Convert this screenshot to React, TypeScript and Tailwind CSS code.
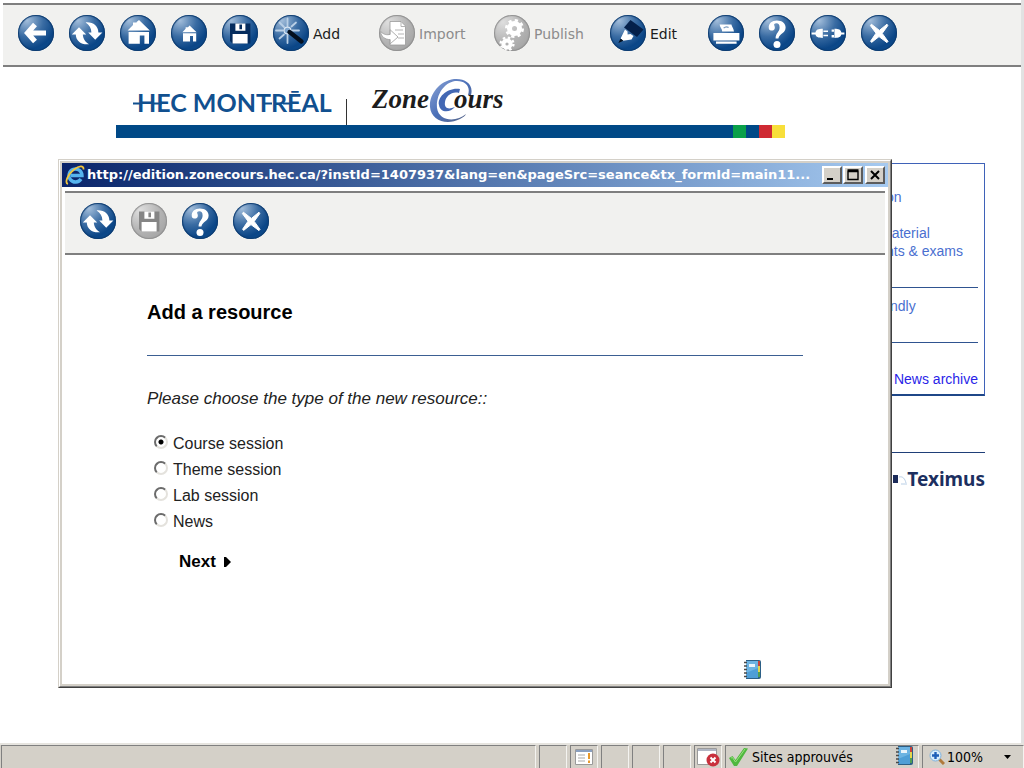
import clsx from 'clsx'
import { useState } from 'react'
import type { ReactNode } from 'react'

const glyphs = {
  back: (
    <path
      d="M17 9.5 L9.5 18 L17 26.5 M10 18 H28"
      fill="none"
      stroke="#fff"
      strokeWidth="5.2"
    />
  ),
  refresh: (
    <g fill="#fff">
      <path d="M10 12.2 L17.2 19.4 H13.8 C14.2 23.8 16 26.6 20 29.2 C12.6 30 7 26.2 6.8 19.4 H2.8 Z" />
      <path d="M26.2 24.8 L19.2 17.4 H22.4 C22.2 12.8 20.4 9.8 16.6 7.4 C24 6.8 29.2 10.8 29.4 17.4 H33.4 Z" />
    </g>
  ),
  home: (
    <g fill="#fff">
      <path d="M19 5 L29.8 15.6 H7.6 L13 10 V7.4 H16.6 V7 Z" />
      <path d="M8.6 17 H29 V28.8 H24.4 V20.6 H19.8 V28.8 H8.6 Z" />
    </g>
  ),
  smallHome: (
    <g fill="#fff">
      <path d="M18.6 10.6 L25.6 17.2 H11.4 L14.6 13.8 V12.2 H17 Z" />
      <path d="M12 18.2 H25.2 V26.6 H22 V21 H19 V26.6 H12 Z" />
    </g>
  ),
  wand: (
    <g strokeLinecap="round">
      <path
        d="M14.5 3.5 V11 M14.5 20 V28 M3 15.5 H10 M19 15.5 H26 M6.5 7.5 L11 12 M23 7.5 L18.5 11.5 M6.5 23.5 L11 19.5"
        stroke="#b9cfe6"
        strokeWidth="1.8"
      />
      <circle cx="14.5" cy="15.5" r="3.4" fill="#7fa6cf" stroke="#d7e4f2" strokeWidth="1.2" />
      <path d="M16.5 17 L28.5 26.5" stroke="#04101f" strokeWidth="4.4" />
    </g>
  ),
  importPage: (
    <g>
      <path d="M11 6.5 H22 L26.5 11 V30 H11 Z" fill="#fff" stroke="#9a9a9a" strokeWidth="0.8" />
      <path d="M22 7 V11.5 H26.5 M16 15 H24 M19 19 H25 M19 23 H25" fill="none" stroke="#b5b5b5" />
      <path
        d="M1.6 16.5 C5 20 8 20 11.2 19.4 V14.8 L19 22 L11.2 28.8 V24.6 C6 24.6 2 21.6 1.6 16.5 Z"
        fill="#fff"
        stroke="#9a9a9a"
        strokeWidth="0.8"
      />
    </g>
  ),
  gears: (
    <g fill="none" stroke="#fff">
      <circle cx="20.5" cy="13.5" r="5" strokeWidth="5" />
      <circle cx="20.5" cy="13.5" r="8.2" strokeWidth="2.6" strokeDasharray="3.2 3.24" />
      <circle cx="13" cy="29" r="3.6" strokeWidth="4" />
      <circle cx="13" cy="29" r="6.4" strokeWidth="2.4" strokeDasharray="2.5 2.53" />
    </g>
  ),
  pencil: (
    <g>
      <path d="M20.5 5 L33.5 14.5 L27 22 L14 12.5 Z" fill="#04204a" />
      <path d="M15 14.5 L17.5 16.5 L17.6 19.5 L20.5 19 L23.5 21 L21.5 24.5 L13 25.8 L10.6 23.4 Z" fill="#fff" />
      <path d="M10.6 23.4 L13.4 25.8 L8.4 28 Z" fill="#04101f" />
    </g>
  ),
  save: (
    <g>
      <path d="M8 8.4 H28.4 V28.4 H10.4 L8 26 Z" className="fill-(--disk)" />
      <path d="M13.4 8.4 H23.4 V15.8 H13.4 Z M10.6 19 H25.6 V28.4 H10.6 Z" fill="#fff" />
      <path d="M17.4 9.6 H20 V14.2 H17.4 Z" className="fill-(--disk)" />
    </g>
  ),
  printer: (
    <g fill="#fff">
      <path d="M11.6 9.4 H23.4 C24 12 25.6 13.4 26 16.4 H14.2 C14 13.4 12 12.4 11.6 9.4 Z" />
      <path d="M5.4 18 H31.4 V25.4 H5.4 Z" />
      <path d="M8 26.4 H28.6 V28.8 H8 Z" />
      <path d="M15.6 13.2 C17 11.8 19 11.4 20.6 12.6" fill="none" stroke="#7c9cc0" strokeWidth="1.2" />
    </g>
  ),
  help: (
    <g fill="#fff">
      <path d="M9.8 13.4 C9.2 8.4 13 5.6 17.8 5.6 C23.2 5.6 26.6 8.4 26.6 12.6 C26.6 18.4 20.4 18.6 19.4 23.6 H16.6 C16.4 17.8 20.6 17 20.6 12.4 C20.6 9.6 19.4 8.2 17.4 8.2 C15.4 8.2 14.6 9 15.4 10.8 C16.6 13.4 15.2 15.6 12.9 15.6 C11.2 15.6 10 14.8 9.8 13.4 Z" />
      <circle cx="18" cy="29.4" r="3.5" />
    </g>
  ),
  plug: (
    <g fill="#fff">
      <path d="M1.6 17.4 H5.4 C6.2 14.8 8 13.8 12.8 13.8 V23 C8 23 6.2 22 5.4 19.6 H1.6 Z M13.4 15.6 H18 V17 H13.4 Z M13.4 19.8 H18 V21.2 H13.4 Z" />
      <path d="M34.4 17.4 H31.4 C30.6 14.8 29 13.8 24.4 13.8 V23 C29 23 30.6 22 31.4 19.6 H34.4 Z" />
      <path d="M21.6 14.4 H24 V16.8 H21.6 Z M21.6 20 H24 V22.4 H21.6 Z" />
    </g>
  ),
  close: (
    <path
      d="M10.4 9.2 L18.4 15.4 L26 9.2 L26.8 10.6 L21.2 18.4 L27 26.4 L26 27.6 L18 21.6 L10.6 27.4 L9.6 26.2 L15 18.2 L9.4 10.6 Z"
      fill="#fff"
      stroke="#fff"
      strokeLinejoin="round"
    />
  ),
}

type Glyph = keyof typeof glyphs

interface ToolProps {
  glyph: Glyph
  title: string
  label?: string
  disabled?: boolean
  className?: string
}

function Tool({ glyph, title, label, disabled, className }: ToolProps) {
  return (
    <button
      type="button"
      aria-label={title}
      disabled={disabled}
      className={clsx(
        'flex shrink-0 items-center gap-1 text-sm',
        disabled ? 'text-[#8c8c8c] [--disk:#858585]' : 'text-[#1c1c1c] [--disk:#052c5e]',
        className,
      )}
    >
      <span
        className={clsx(
          'size-9 shrink-0 overflow-hidden rounded-full',
          disabled
            ? 'bg-[radial-gradient(circle_at_25%_20%,#dedede,#b4b4b4_50%,#9d9d9d)] inset-shadow-[0_0_1px_1px_#8f8f8f]'
            : 'bg-[radial-gradient(circle_at_25%_15%,#a3bedb,#3a6ca3_40%,#0b4687_70%,#0f5396)] inset-shadow-[0_0_1px_1px_#0c3a6e]',
        )}
      >
        <svg viewBox="0 0 36 36" className="size-9">
          {glyphs[glyph]}
        </svg>
      </span>
      {label && <span className="pt-0.5">{label}</span>}
    </button>
  )
}

function Toolbar({ children }: { children: ReactNode }) {
  return (
    <div className="ml-[3px] flex gap-[15px] border-y-2 border-[#7f7f7f] bg-[#f1f1ef] px-[15px] pt-2.5 pb-3.5 font-['DejaVu_Sans',sans-serif]">
      {children}
    </div>
  )
}

function HecLogo() {
  return (
    <svg width="204" height="40" viewBox="0 0 204 40" role="img" aria-label="HEC Montréal">
      <text x="5" y="32" fill="#11508f" fontSize="25" fontWeight="700" fontFamily="Lato, sans-serif">
        HEC MONTRĒAL
      </text>
      <path d="M1 23.5 H8 M22 23.5 H30 M132 23.5 H140 M151 23.5 H159" stroke="#11508f" strokeWidth="2" />
    </svg>
  )
}

function ZoneCoursLogo() {
  return (
    <svg width="140" height="48" viewBox="0 0 140 48" role="img" aria-label="ZoneCours">
      <defs>
        <linearGradient id="swirl" x1="0" y1="0" x2="1" y2="1">
          <stop offset="0" stopColor="#8fa6d6" />
          <stop offset="0.5" stopColor="#4a6fb8" />
          <stop offset="1" stopColor="#5b6480" />
        </linearGradient>
      </defs>
      <path
        d="M103 18 C106 7 97 1 86 2 C71 4 61 18 62 30 C63 43 78 49 92 42 C95 40.500 97 39 98 37 C89 45 71 45 69 31 C68 19 75 6 87 4 C97 3 103 9 100 18 Z"
        fill="url(#swirl)"
      />
      <path
        d="M92 12 C80 10 69 20 71 28 C72 36 82 36 87 30 C80 33 76 31 77 25 C78 19 84 14 91 16 Z"
        fill="#4368b4"
      />
      <g fontFamily="'Liberation Serif', serif" fontStyle="italic" fontWeight="700" fontSize="27" fill="#1c1c1c">
        <text x="4" y="31">Zone</text>
        <text x="86" y="31">ours</text>
      </g>
    </svg>
  )
}

function Notebook({ className }: { className?: string }) {
  return (
    <svg width="19" height="21" viewBox="0 0 19 21" className={className} aria-hidden="true">
      <path d="M3 1 H16 Q18 1 18 3 V18 Q18 20 16 20 H3 Z" fill="#2c5f86" />
      <path d="M15 2 H17 V7 H15 Z" fill="#c8423a" />
      <path d="M15 7 H17 V13 H15 Z" fill="#e3d64c" />
      <path d="M15 13 H17 V18 H15 Z" fill="#4f9d54" />
      <path d="M3 2 H15 V19 H3 Z" fill="#4f9ed6" />
      <path d="M3 2 H15 V9 L3 14 Z" fill="#6cb3e2" />
      <path d="M6 5 H12 V8 H6 Z" fill="#e8f3fb" />
      <path
        d="M1 3.500 H4 M1 7 H4 M1 10.500 H4 M1 14 H4 M1 17.500 H4"
        stroke="#4a4a4a"
        strokeWidth="1.400"
      />
    </svg>
  )
}

function ExplorerIcon() {
  return (
    <svg width="20" height="20" viewBox="0 0 20 20" aria-hidden="true" className="shrink-0">
      <path
        d="M16 14 A6.500 6.500 0 1 1 17 10.500 H6"
        fill="none"
        stroke="#56b4ee"
        strokeWidth="3.400"
      />
      <path
        d="M3 19 C-1 18 3 9 9 4.500 C14 0.500 19 0 18.500 4.500"
        fill="none"
        stroke="#f2c63c"
        strokeWidth="1.800"
      />
    </svg>
  )
}

function WindowButton({ title, children }: { title: string; children: ReactNode }) {
  return (
    <button
      type="button"
      aria-label={title}
      className="h-[18px] w-5 border-2 border-t-white border-r-[#5c5c5c] border-b-[#5c5c5c] border-l-white bg-[#d4d0c8]"
    >
      <svg viewBox="0 0 16 14" className="h-3.5 w-4" fill="none" stroke="#000" strokeWidth="2">
        {children}
      </svg>
    </button>
  )
}

const resourceTypes = ['Course session', 'Theme session', 'Lab session', 'News']

function ResourceWindow() {
  const [type, setType] = useState('Course session')

  return (
    <section className="absolute top-[159px] right-[132px] left-[58px] border border-t-[#d4d0c8] border-r-[#404040] border-b-[#404040] border-l-[#d4d0c8]">
      <div className="border border-t-white border-r-[#808080] border-b-[#808080] border-l-white bg-[#d4d0c8] p-0.5">
        <header className="flex h-6 items-center gap-0.5 bg-linear-to-r from-[#0a246a] to-[#a6caf0] pr-[3px] pl-[3px]">
          <ExplorerIcon />
          <h1 className="min-w-0 flex-1 font-['DejaVu_Sans',sans-serif] text-[13px] font-bold whitespace-nowrap text-white">
            http://edition.zonecours.hec.ca/?instId=1407937&amp;lang=en&amp;pageSrc=seance&amp;tx_formId=main11...
          </h1>
          <div className="flex gap-px">
            <WindowButton title="Minimize">
              <path d="M3 11 H9" />
            </WindowButton>
            <WindowButton title="Maximize">
              <path d="M2.500 2 H13.500 M3 3.500 H13 V11.500 H3 Z" strokeWidth="1.400" />
            </WindowButton>
          </div>
          <WindowButton title="Close">
            <path d="M4 3 L12 11 M12 3 L4 11" />
          </WindowButton>
        </header>

        <div className="bg-white pt-1 pb-1">
          <div className="mr-[3px]">
            <Toolbar>
              <Tool glyph="refresh" title="Refresh" />
              <Tool glyph="save" title="Save" disabled />
              <Tool glyph="help" title="Help" />
              <Tool glyph="close" title="Close" />
            </Toolbar>
          </div>

          <form className="mx-[85px] pt-[43px]" onSubmit={(event) => event.preventDefault()}>
            <h2 className="text-xl font-bold text-black">Add a resource</h2>
            <hr className="mt-[29px] border-[#3b5f92]" />
            <fieldset className="mt-[31px]">
              <legend className="text-[17px] leading-6 italic">
                Please choose the type of the new resource::
              </legend>
              <div className="mt-5 pl-[7px]">
                {resourceTypes.map((name) => (
                  <label key={name} className="flex h-[26px] items-start gap-[5px] text-base leading-[26px]">
                    <input
                      type="radio"
                      name="resource"
                      checked={type === name}
                      onChange={() => setType(name)}
                      className="mt-1 size-3.5 appearance-none rounded-full border-2 border-t-[#6b6b6b] border-r-[#e4e2dd] border-b-[#e4e2dd] border-l-[#6b6b6b] bg-white checked:bg-[radial-gradient(circle,#000_2px,#fff_3px)]"
                    />
                    {name}
                  </label>
                ))}
              </div>
            </fieldset>
            <button
              type="submit"
              className="mt-[15px] ml-8 flex items-center gap-2 text-[17px] leading-6 font-bold text-black"
            >
              Next
              <svg width="7" height="10" viewBox="0 0 7 10" aria-hidden="true">
                <path d="M0 0 H2 L7 5 L2 10 H0 Z" />
              </svg>
            </button>
            <div className="mt-[85px] flex justify-end pr-[41px]">
              <Notebook />
            </div>
          </form>
        </div>
      </div>
    </section>
  )
}

function Sidebar() {
  return (
    <aside className="mt-[25px] mr-9 ml-auto w-[105px] text-sm leading-[18px] text-[#4a6fd0]">
      <nav className="flex flex-col border-t border-r border-b-2 border-t-[#3f62b8] border-r-[#3f62b8] border-b-[#1f4788] pt-6 pr-1.5 pb-1.5">
        <a href="#presentation" className="pl-1.5">on</a>
        <a href="#material" className="mt-[18px]">material</a>
        <a href="#exams" className="pl-1.5">nts &amp; exams</a>
        <hr className="mt-[27px] border-[#2f5490]" />
        <a href="#print" className="mt-[9px] pl-2.5">ndly</a>
        <hr className="mt-[27px] border-[#2f5490]" />
        <a href="#archive" className="mt-[27px] text-right text-[#2a1fe8]">
          News archive
        </a>
      </nav>
      <hr className="mt-14 border-[#1f3f78]" />
      <div className="mt-3 flex items-center justify-end">
        <svg width="14" height="12" viewBox="0 0 14 12" aria-hidden="true">
          <path d="M0 2 H5 V10 H0 Z" fill="#1c2b5a" />
          <path d="M6 4 C10 3 12 6 13 10 M8 11 L14 11" fill="none" stroke="#b9cfe6" />
        </svg>
        <span className="font-['Noto_Sans',sans-serif] text-[19px] leading-7 font-bold text-[#1c2f60]">
          Teximus
        </span>
      </div>
    </aside>
  )
}

function StatusCell({ className, children }: { className?: string; children?: ReactNode }) {
  return (
    <div
      className={clsx(
        'flex shrink-0 items-center border-t border-r border-l border-t-[#808080] border-r-[#f4f3f0] border-l-[#808080]',
        className,
      )}
    >
      {children}
    </div>
  )
}

function StatusBar() {
  return (
    <footer className="flex h-[25px] gap-[3px] border-t-2 border-[#e6e4df] bg-[#d4d0c8] pl-px font-['DejaVu_Sans_Condensed','DejaVu_Sans',sans-serif] text-sm text-black">
      <StatusCell className="min-w-0 flex-1" />
      <StatusCell className="w-7" />
      <StatusCell className="w-7 justify-center">
        <svg width="18" height="16" viewBox="0 0 18 16" aria-hidden="true">
          <path d="M0.500 0.500 H17.500 V15.500 H0.500 Z" fill="#fff" stroke="#9a9a9a" />
          <path d="M1 2 H17" stroke="#8aa0c0" strokeWidth="2" />
          <path d="M3 6 H10 M3 9 H10 M3 12 H10" stroke="#a9a9a9" />
          <path d="M14 4 V10 M14 11.500 V14" stroke="#e89a2c" strokeWidth="2" />
        </svg>
      </StatusCell>
      <StatusCell className="w-7" />
      <StatusCell className="w-7" />
      <StatusCell className="w-7" />
      <StatusCell className="w-7 justify-center">
        <svg width="23" height="20" viewBox="0 0 23 20" aria-hidden="true">
          <path d="M0.500 1.500 H19.500 V17.500 H0.500 Z" fill="#fff" stroke="#9a9a9a" />
          <path d="M1 3 H19" stroke="#b0b6c4" strokeWidth="2" />
          <circle cx="16" cy="13" r="6.500" fill="#c9303c" />
          <path d="M13.500 10.500 L18.500 15.500 M18.500 10.500 L13.500 15.500" stroke="#fff" strokeWidth="2" />
        </svg>
      </StatusCell>
      <StatusCell className="w-[194px] gap-1 pl-[3px]">
        <svg width="19" height="18" viewBox="0 0 19 18" aria-hidden="true">
          <path d="M0 10 L3.500 8 L6.500 12 L15 0 L19 0.500 L8 18 H5 Z" fill="#4fb83f" />
          <path d="M2 10 L3.500 9.500 L6.500 14 L16 1" fill="none" stroke="#9be07f" />
        </svg>
        Sites approuvés
        <Notebook className="mr-1 mb-1 ml-auto" />
      </StatusCell>
      <StatusCell className="w-[102px] pr-3 pl-1.5">
        <svg width="16" height="16" viewBox="0 0 16 16" aria-hidden="true">
          <path d="M10 10 L15 15" stroke="#b07a3c" strokeWidth="3" />
          <circle cx="6.500" cy="6.500" r="5.500" fill="#d8ecfb" stroke="#7fb2dc" />
          <path d="M6.500 3 V10 M3 6.500 H10" stroke="#1f5fb8" strokeWidth="2.400" />
        </svg>
        <button type="button" className="ml-0.5 flex flex-1 items-center justify-between">
          100%
          <svg width="7" height="4" viewBox="0 0 7 4" aria-hidden="true">
            <path d="M0 0 H7 L3.500 4 Z" />
          </svg>
        </button>
      </StatusCell>
    </footer>
  )
}

export default function App() {
  return (
    <div className="relative flex min-h-screen flex-col bg-white font-['Liberation_Sans',Arial,sans-serif] text-[#222]">
      <main className="flex flex-1 flex-col border-r-3 border-[#e2e2e2] pt-[3px]">
        <Toolbar>
          <Tool glyph="back" title="Back" />
          <Tool glyph="refresh" title="Refresh" />
          <Tool glyph="home" title="Home" />
          <Tool glyph="smallHome" title="Site home" />
          <Tool glyph="save" title="Save" />
          <Tool glyph="wand" title="Add" label="Add" className="w-[91px]" />
          <Tool glyph="importPage" title="Import" label="Import" disabled className="w-25" />
          <Tool glyph="gears" title="Publish" label="Publish" disabled className="w-[101px]" />
          <Tool glyph="pencil" title="Edit" label="Edit" className="w-[83px]" />
          <Tool glyph="printer" title="Print" />
          <Tool glyph="help" title="Help" />
          <Tool glyph="plug" title="Disconnect" />
          <Tool glyph="close" title="Close" />
        </Toolbar>

        <div className="ml-[116px] max-w-[669px]">
          <div className="flex h-[58px] items-end pl-4">
            <div className="pb-[5px]">
              <HecLogo />
            </div>
            <div className="ml-2.5 h-[26px] w-px bg-[#333]" />
            <div className="ml-[21px]">
              <ZoneCoursLogo />
            </div>
          </div>
          <div className="flex h-[13px] justify-end bg-[#004987]">
            <span className="w-[13px] bg-[#0aa04a]" />
            <span className="w-[13px] bg-[#004987]" />
            <span className="w-[13px] bg-[#cf2a33]" />
            <span className="w-[13px] bg-[#f8df3a]" />
          </div>
        </div>

        <Sidebar />
      </main>

      <ResourceWindow />
      <StatusBar />
    </div>
  )
}
